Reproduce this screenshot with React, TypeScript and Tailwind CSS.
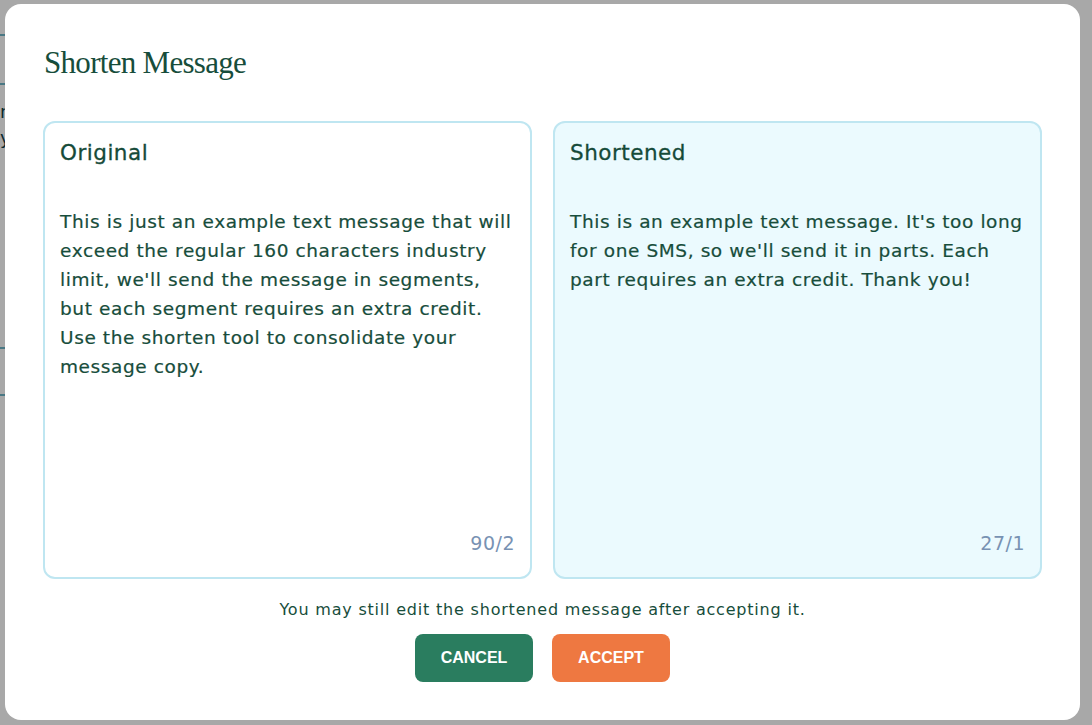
import React from 'react'

const original =
  "This is just an example text message that will exceed the regular 160 characters industry limit, we'll send the message in segments, but each segment requires an extra credit. Use the shorten tool to consolidate your message copy."

const shortened =
  "This is an example text message. It's too long for one SMS, so we'll send it in parts. Each part requires an extra credit. Thank you!"

const MessageCard = ({ title, text, count, tinted }: { title: string; text: string; count: string; tinted?: boolean }) => (
  <div
    className={`flex h-[458px] flex-1 flex-col rounded-xl border-2 border-[#bfe6f1] px-[15px] pt-[14px] pb-[20px] ${
      tinted ? 'bg-[#ebfafe]' : 'bg-white'
    }`}
  >
    <h2 className="text-[21.5px] leading-[32px] tracking-[0.5px] text-[#154a39] [-webkit-text-stroke:0.3px_#154a39]">{title}</h2>
    <p className="mt-[38px] text-[18.5px] leading-[29px] tracking-[0.6px] text-[#174d3b] [-webkit-text-stroke:0.2px_#174d3b]">{text}</p>
    <div className="mt-auto text-right text-[19px] tracking-[0.5px] text-[#7892b3]">{count}</div>
  </div>
)

export default function App() {
  return (
    <div className="relative h-[725px] w-full overflow-hidden bg-white font-['DejaVu_Sans',sans-serif]">
      {/* page behind the dialog */}
      <div className="flex flex-col">
        <div className="mt-[34px] h-[2px] w-[60px] bg-[#6fb7c9]" />
        <div className="mt-[47px] h-[2px] w-[60px] bg-[#6fb7c9]" />
        <p className="mt-[14px] text-[18px] leading-[26px] text-[#0f3d48]">r</p>
        <p className="text-[18px] leading-[26px] text-[#0f3d48]">y.</p>
        <div className="mt-[196px] h-[2px] w-[60px] bg-[#6fb7c9]" />
        <div className="mt-[45px] h-[2px] w-[60px] bg-[#6fb7c9]" />
      </div>

      {/* overlay */}
      <div className="absolute inset-0 bg-black/[0.34]">
        <div className="absolute left-[5px] top-[4px] flex h-[716px] w-[1075px] flex-col rounded-2xl bg-white px-[38px]">
          <h1 className="mt-[38px] pl-[1px] font-['Liberation_Serif',serif] text-[31px] leading-[42px] tracking-[-0.7px] text-[#174d3b]">
            Shorten Message
          </h1>
          <div className="mt-[37px] flex gap-[21px]">
            <MessageCard title="Original" text={original} count="90/2" />
            <MessageCard title="Shortened" text={shortened} count="27/1" tinted />
          </div>
          <p className="mt-[20px] text-center text-[16px] leading-[22px] tracking-[0.8px] text-[#174d3b]">
            You may still edit the shortened message after accepting it.
          </p>
          <div className="mt-[13px] flex justify-center gap-[19px]">
            <button className="h-[48px] w-[118px] rounded-lg bg-[#2a7d5f] font-['Liberation_Sans',sans-serif] text-[16px] font-bold text-white">
              CANCEL
            </button>
            <button className="h-[48px] w-[118px] rounded-lg bg-[#ee7841] font-['Liberation_Sans',sans-serif] text-[16px] font-bold text-white">
              ACCEPT
            </button>
          </div>
        </div>
      </div>
    </div>
  )
}
